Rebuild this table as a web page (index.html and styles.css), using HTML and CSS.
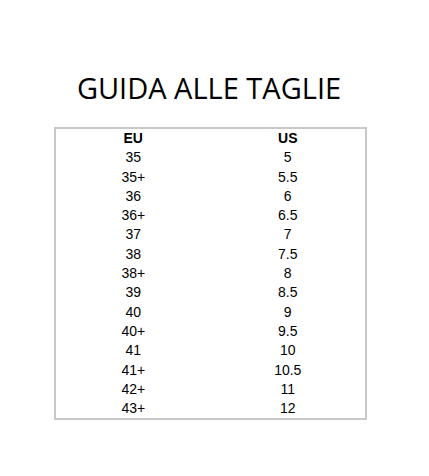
FILE: index.html
```html
<!DOCTYPE html>
<html>
<head>
<meta charset="utf-8">
<link rel="stylesheet" href="styles.css">
</head>
<body>
<div class="page">
  <h1 class="title">GUIDA ALLE TAGLIE</h1>
  <table class="sizes">
    <thead>
      <tr><th>EU</th><th>US</th></tr>
    </thead>
    <tbody>
      <tr><td>35</td><td>5</td></tr>
      <tr><td>35+</td><td>5.5</td></tr>
      <tr><td>36</td><td>6</td></tr>
      <tr><td>36+</td><td>6.5</td></tr>
      <tr><td>37</td><td>7</td></tr>
      <tr><td>38</td><td>7.5</td></tr>
      <tr><td>38+</td><td>8</td></tr>
      <tr><td>39</td><td>8.5</td></tr>
      <tr><td>40</td><td>9</td></tr>
      <tr><td>40+</td><td>9.5</td></tr>
      <tr><td>41</td><td>10</td></tr>
      <tr><td>41+</td><td>10.5</td></tr>
      <tr><td>42+</td><td>11</td></tr>
      <tr><td>43+</td><td>12</td></tr>
    </tbody>
  </table>
</div>
</body>
</html>
```

FILE: styles.css
```css
html, body {
  margin: 0;
  padding: 0;
  background: #ffffff;
}

.page {
  width: 429px;
  height: 476px;
  padding-top: 70px;
  box-sizing: border-box;
}

.title {
  margin: 0;
  width: 418px;
  text-align: center;
  font-family: "Open Sans", sans-serif;
  font-weight: 400;
  font-size: 29px;
  line-height: 36px;
  color: #000000;
  height: 57px;
}

.sizes {
  margin-left: 54px;
  width: 313px;
  border: 2px solid #c8c8c8;
  border-collapse: collapse;
  font-family: "Liberation Sans", Arial, sans-serif;
  font-size: 14px;
  color: #000000;
  table-layout: fixed;
}

.sizes th,
.sizes td {
  width: 50%;
  padding: 0;
  text-align: center;
  height: 19.3px;
  line-height: 19.3px;
}

.sizes th {
  font-weight: 700;
}
```
